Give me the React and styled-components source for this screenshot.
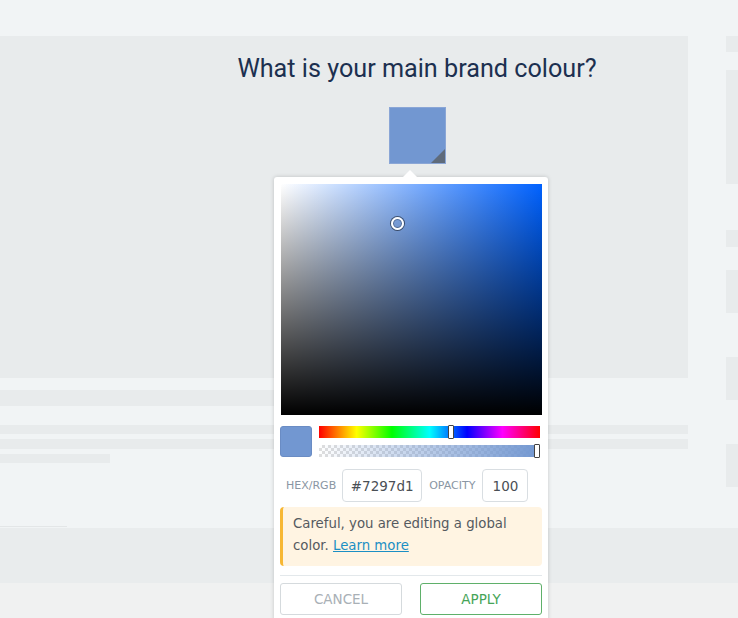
import React from "react";
import styled, { createGlobalStyle } from "styled-components";

const Global = createGlobalStyle`
  html, body { margin: 0; padding: 0; }
  body { background: #f1f4f5; font-family: "DejaVu Sans", Verdana, sans-serif; }
`;

const Page = styled.div`
  position: relative;
  width: 738px;
  height: 618px;
  overflow: hidden;
  background: #f1f4f5;
  display: flex;
  flex-direction: column;
`;

const Top = styled.div`
  display: flex;
  height: 528px;
  padding-top: 36px;
  box-sizing: border-box;
`;

const LeftCol = styled.div`
  width: 688px;
  display: flex;
  flex-direction: column;
`;

const Panel = styled.div`
  height: 342px;
  background: #e8ebec;
  padding: 18px 0 0 146px;
  box-sizing: border-box;
  display: flex;
  flex-direction: column;
  align-items: center;
`;

const Title = styled.h1`
  margin: 0;
  font-family: Roboto, "Liberation Sans", sans-serif;
  font-weight: 400;
  font-size: 25.2px;
  line-height: 29px;
  color: #1c3050;
`;

const Swatch = styled.div`
  position: relative;
  margin-top: 24px;
  width: 57px;
  height: 57px;
  box-sizing: border-box;
  background: #7297d1;
  border: 1px solid #8aa6d6;
  overflow: hidden;
`;

const Corner = styled.div`
  position: absolute;
  right: 0;
  bottom: 0;
  width: 0;
  height: 0;
  border-left: 14px solid transparent;
  border-bottom: 14px solid #5f6b7b;
`;

const Stripe = styled.div`
  height: ${(p) => p.$h}px;
  width: ${(p) => p.$w || "100%"};
  margin-top: ${(p) => p.$mt}px;
  background: ${(p) => p.$c || "#e8ebec"};
`;

const RightCol = styled.div`
  margin-left: 38px;
  flex: 1;
  display: flex;
  flex-direction: column;
`;

const Block = styled.div`
  height: ${(p) => p.$h}px;
  margin-top: ${(p) => p.$mt}px;
  background: #e8ebec;
`;

const BottomBand = styled.div`
  height: 55px;
  background: #e9eced;
`;

const Footer = styled.div`
  flex: 1;
  background: #f0f1f1;
`;

const Popover = styled.div`
  position: absolute;
  left: 274px;
  top: 177px;
  width: 274px;
  padding: 7px 6px 7px 6px;
  box-sizing: border-box;
  background: #fff;
  border-radius: 3px;
  box-shadow: 0 0 4px rgba(0, 0, 0, 0.18);
  display: flex;
  flex-direction: column;

  &::before {
    content: "";
    position: absolute;
    top: -7px;
    left: 129px;
    border-left: 7px solid transparent;
    border-right: 7px solid transparent;
    border-bottom: 7px solid #fff;
  }
`;

const SatBox = styled.div`
  position: relative;
  margin-left: 1px;
  height: 231px;
  background: linear-gradient(to top, #000, rgba(0, 0, 0, 0)),
    linear-gradient(to right, #fff, hsl(217, 100%, 50%));
`;

const SatCursor = styled.div`
  position: absolute;
  left: 110px;
  top: 33px;
  width: 9px;
  height: 9px;
  border-radius: 50%;
  border: 2px solid #fff;
  box-shadow: 0 0 0 1px rgba(0, 0, 0, 0.5), inset 0 0 0 1px rgba(0, 0, 0, 0.3);
`;

const SliderRow = styled.div`
  display: flex;
  gap: 7px;
  margin-top: 11px;
`;

const Preview = styled.div`
  width: 32px;
  height: 31px;
  box-sizing: border-box;
  border-radius: 3px;
  background: #7297d1;
  border: 1px solid #6a8cc4;
`;

const Bars = styled.div`
  flex: 1;
  display: flex;
  flex-direction: column;
  gap: 7px;
  padding-right: 2px;
`;

const Bar = styled.div`
  position: relative;
  height: 12px;
  background: ${(p) => p.$bg};
`;

const Handle = styled.div`
  position: absolute;
  top: -1px;
  left: ${(p) => p.$left};
  width: 4px;
  height: 12px;
  background: #fff;
  border: 1px solid #444;
  border-radius: 1px;
`;

const InputRow = styled.div`
  display: flex;
  align-items: center;
  margin-top: 12px;
  padding-left: 6px;
`;

const Label = styled.span`
  font-size: 11px;
  color: #8a96a3;
  margin-right: ${(p) => p.$mr}px;
`;

const Field = styled.div`
  width: ${(p) => p.$w}px;
  height: 33px;
  box-sizing: border-box;
  border: 1px solid #d9dee2;
  border-radius: 4px;
  display: flex;
  align-items: center;
  justify-content: center;
  font-size: 13.5px;
  color: #4a4f55;
  margin-right: ${(p) => p.$mr || 0}px;
`;

const Notice = styled.div`
  margin-top: 5px;
  padding: 6px 8px 9px 10px;
  background: #fff4e2;
  border-left: 3px solid #f7b733;
  border-radius: 4px;
  font-size: 13.3px;
  line-height: 22px;
  color: #555a60;
`;

const Link = styled.a`
  color: #1b8fc4;
  text-decoration: underline;
`;

const Divider = styled.div`
  height: 1px;
  background: #e3e8eb;
  margin-top: 9px;
`;

const Buttons = styled.div`
  display: flex;
  gap: 18px;
  margin-top: 7px;
`;

const Button = styled.button`
  width: 122px;
  height: 32px;
  background: #fff;
  border: 1px solid ${(p) => (p.$primary ? "#5fb06a" : "#d5dadd")};
  color: ${(p) => (p.$primary ? "#46a457" : "#a9b0b6")};
  border-radius: 3px;
  font-family: "DejaVu Sans", Verdana, sans-serif;
  font-size: 13.5px;
  text-transform: uppercase;
  padding: 0;
`;

export default function App() {
  return (
    <Page>
      <Global />
      <Top>
        <LeftCol>
          <Panel>
            <Title>What is your main brand colour?</Title>
            <Swatch>
              <Corner />
            </Swatch>
          </Panel>
          <Stripe $h={16} $mt={12} $w="274px" />
          <Stripe $h={9} $mt={19} />
          <Stripe $h={10} $mt={5} />
          <Stripe $h={9} $mt={5} $w="110px" />
          <Stripe $h={1} $mt={63} $w="67px" $c="#e3e6e7" />
        </LeftCol>
        <RightCol>
          <Block $h={16} $mt={0} />
          <Block $h={114} $mt={18} />
          <Block $h={17} $mt={46} />
          <Block $h={43} $mt={23} />
          <Block $h={43} $mt={44} />
          <Block $h={43} $mt={44} />
        </RightCol>
      </Top>
      <BottomBand />
      <Footer />
      <Popover>
        <SatBox>
          <SatCursor />
        </SatBox>
        <SliderRow>
          <Preview />
          <Bars>
            <Bar
              $bg="linear-gradient(to right, #f00 0%, #ff0 17%, #0f0 33%, #0ff 50%, #00f 67%, #f0f 83%, #f00 100%)"
            >
              <Handle $left="129px" />
            </Bar>
            <Bar
              $bg="linear-gradient(to right, rgba(114,151,209,0), #7297d1), repeating-conic-gradient(#dedede 0% 25%, #fff 0% 50%) 0 0 / 6px 6px"
            >
              <Handle $left="215px" />
            </Bar>
          </Bars>
        </SliderRow>
        <InputRow>
          <Label $mr={6}>HEX/RGB</Label>
          <Field $w={80} $mr={7}>#7297d1</Field>
          <Label $mr={7}>OPACITY</Label>
          <Field $w={46}>100</Field>
        </InputRow>
        <Notice>
          Careful, you are editing a global color. <Link>Learn more</Link>
        </Notice>
        <Divider />
        <Buttons>
          <Button>Cancel</Button>
          <Button $primary>Apply</Button>
        </Buttons>
      </Popover>
    </Page>
  );
}
